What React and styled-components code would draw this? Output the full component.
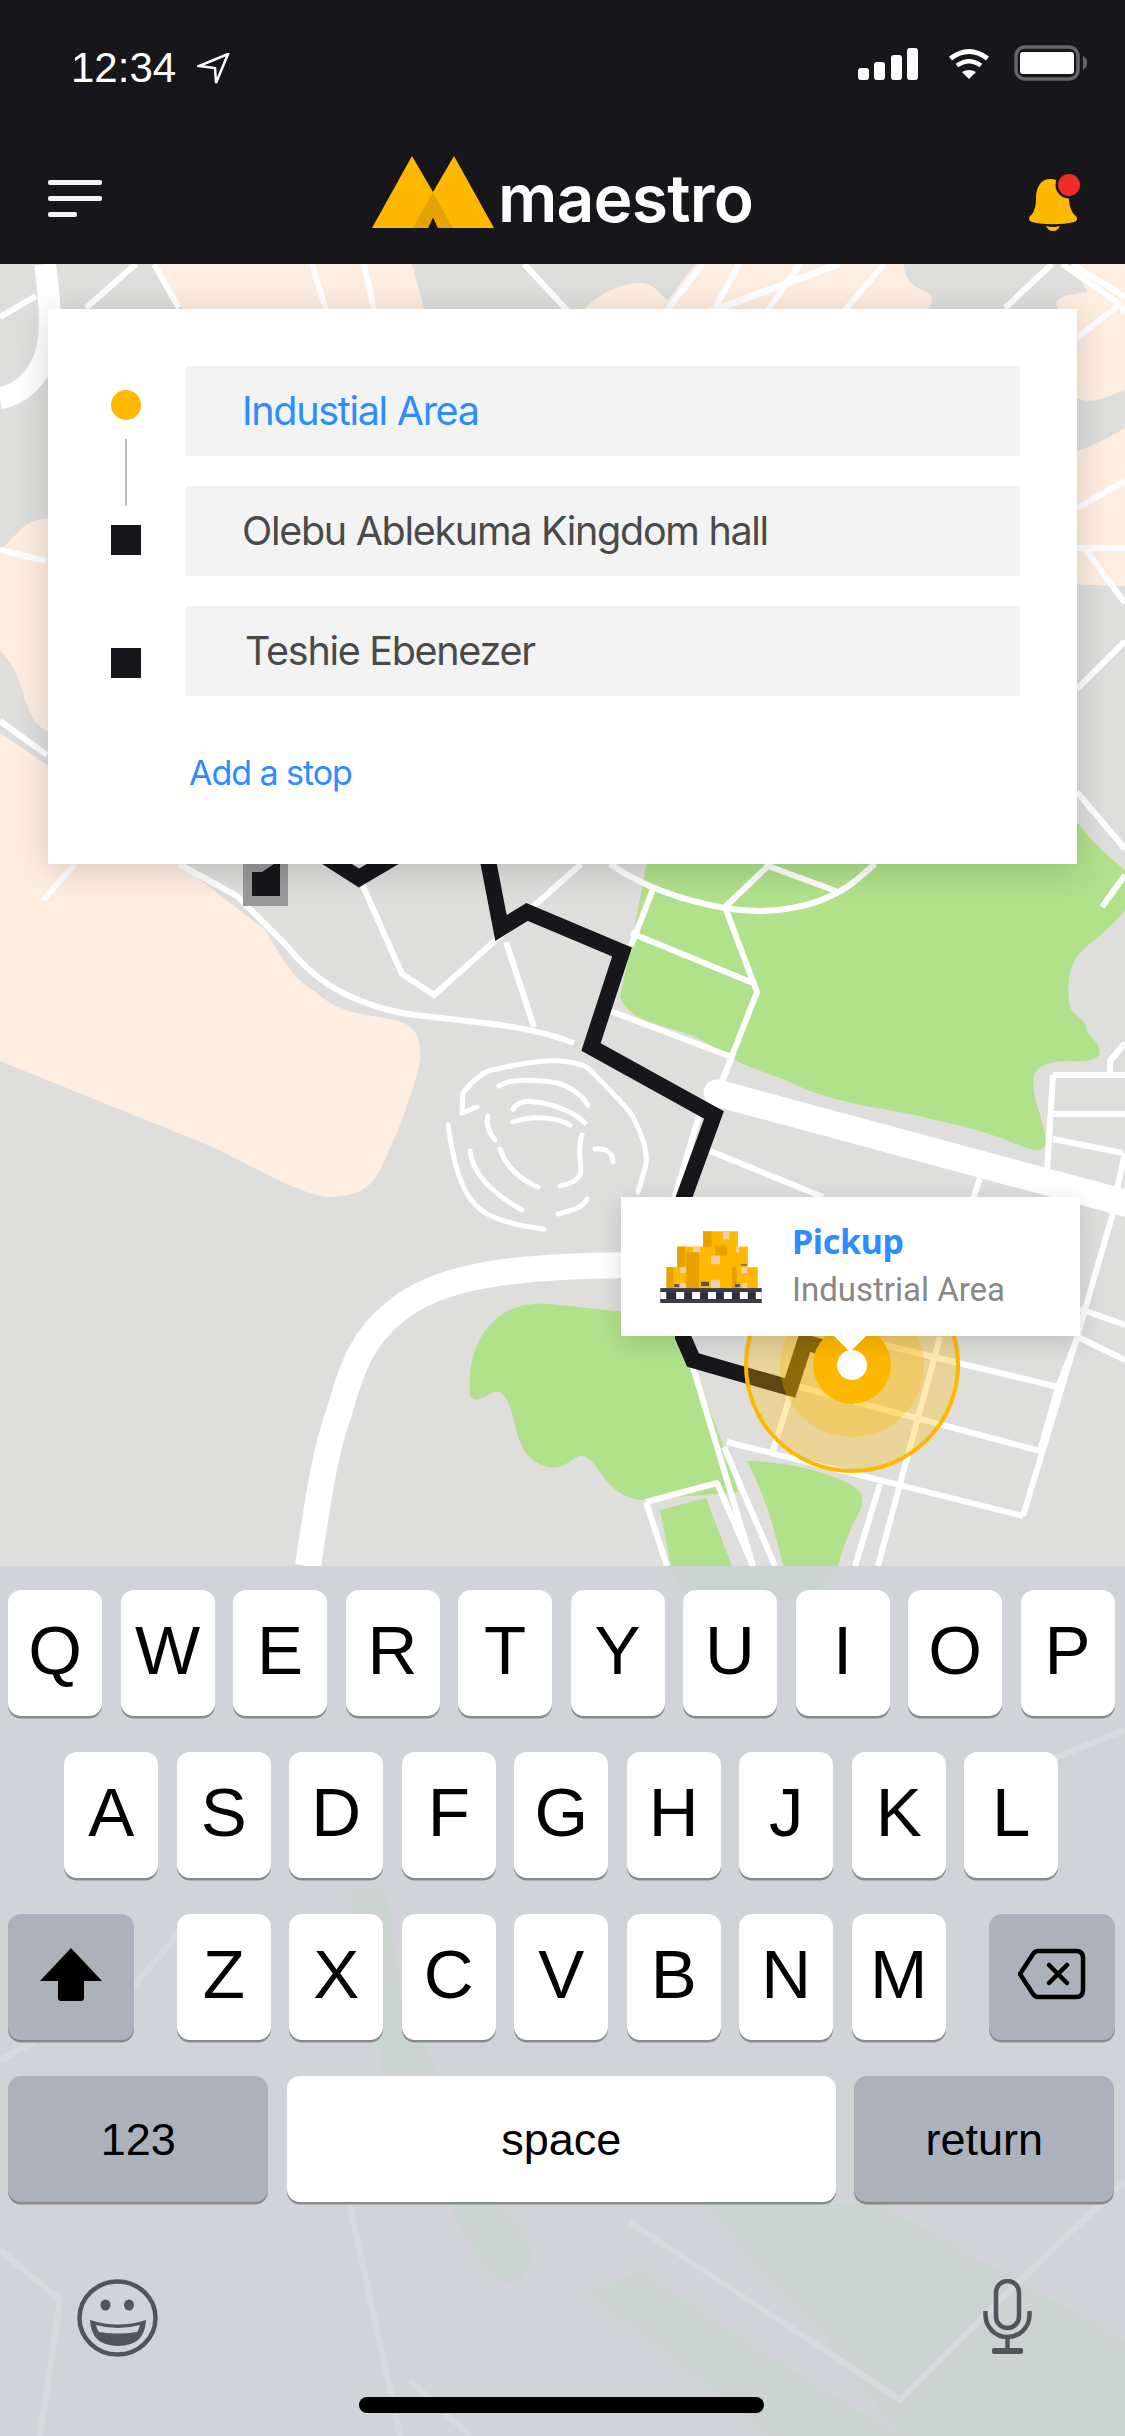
import React from "react";
import styled, { createGlobalStyle } from "styled-components";

const GlobalStyle = createGlobalStyle`
  html, body {
    margin: 0;
    padding: 0;
    background: #16161b;
  }
`;

const Phone = styled.div`
  width: 1125px;
  height: 2436px;
  display: flex;
  flex-direction: column;
  overflow: hidden;
  font-family: "Liberation Sans", Arial, sans-serif;
`;

const TopBar = styled.header`
  height: 264px;
  flex: none;
  background: #16161b;
  display: flex;
  flex-direction: column;
`;

const StatusBar = styled.div`
  height: 130px;
  display: flex;
  align-items: flex-start;
  justify-content: space-between;
  padding: 44px 38px 0 71px;
  box-sizing: border-box;
`;

const StatusLeft = styled.div`
  display: flex;
  align-items: flex-start;
  gap: 21px;
`;

const Time = styled.span`
  color: #fff;
  font-size: 42px;
  line-height: 48px;
`;

const StatusRight = styled.div`
  display: flex;
  align-items: flex-start;
  gap: 30px;
  padding-top: 4px;
`;

const NavBar = styled.div`
  flex: 1;
  display: flex;
  align-items: center;
  justify-content: space-between;
  padding: 0 42px 0 48px;
`;

const MenuButton = styled.div`
  width: 54px;
  display: flex;
  flex-direction: column;
  gap: 11px;
  margin-top: 2px;
`;

const MenuBar = styled.span`
  display: block;
  height: 5px;
  width: ${(p) => p.$w}px;
  border-radius: 2px;
  background: #f4f4f4;
`;

const Logo = styled.div`
  display: flex;
  align-items: flex-end;
  gap: 4px;
  margin: 0 6px 10px 0;
`;

const LogoText = styled.span`
  color: #fff;
  font-family: Inter, sans-serif;
  font-weight: 600;
  font-size: 66px;
  line-height: 66px;
  letter-spacing: -0.8px;
  margin-bottom: -3px;
`;

const BellWrap = styled.div`
  margin-top: 8px;
  height: 60px;
`;

const MapArea = styled.main`
  position: relative;
  height: 1302px;
  flex: none;
  background: #dededc;
`;

const MapSvg = styled.svg`
  display: block;
  width: 1125px;
  height: 1302px;
`;

const RouteCard = styled.section`
  position: absolute;
  left: 48px;
  top: 45px;
  width: 1029px;
  height: 555px;
  box-sizing: border-box;
  padding: 57px 57px 0 63px;
  background: #fff;
  display: flex;
  gap: 45px;
  box-shadow: 0 6px 34px rgba(0, 0, 0, 0.16);
`;

const Rail = styled.div`
  width: 30px;
  flex: none;
  display: flex;
  flex-direction: column;
  align-items: center;
  padding-top: 24px;
`;

const RailDot = styled.span`
  width: 30px;
  height: 30px;
  border-radius: 50%;
  background: #ffb800;
`;

const RailLine = styled.span`
  width: 2px;
  height: 67px;
  margin: 19px 0;
  background: #bdbdbd;
`;

const RailStop = styled.span`
  width: 30px;
  height: 30px;
  background: #16161b;
  margin-bottom: ${(p) => p.$gap || 0}px;
`;

const Fields = styled.div`
  flex: 1;
  display: flex;
  flex-direction: column;
  gap: 30px;
`;

const Field = styled.div`
  height: 90px;
  display: flex;
  align-items: center;
  box-sizing: border-box;
  padding-left: ${(p) => p.$inset || 56}px;
  background: #f3f3f3;
  color: ${(p) => (p.$active ? "#2d8cff" : "#4a4a4a")};
  font-family: Inter, sans-serif;
  font-size: 39.5px;
  letter-spacing: -1.3px;
`;

const AddStop = styled.div`
  margin: 27px 0 0 3px;
  color: #2d8cff;
  font-family: Inter, sans-serif;
  font-size: 34px;
  line-height: 40px;
  letter-spacing: -1.05px;
`;

const PickupCard = styled.aside`
  position: absolute;
  left: 621px;
  top: 933px;
  width: 459px;
  height: 139px;
  box-sizing: border-box;
  padding-left: 39px;
  background: #fff;
  display: flex;
  align-items: center;
  gap: 30px;
  box-shadow: 0 6px 24px rgba(0, 0, 0, 0.14);

  &::after {
    content: "";
    position: absolute;
    left: 213px;
    top: 139px;
    border-left: 16px solid transparent;
    border-right: 16px solid transparent;
    border-top: 16px solid #fff;
  }
`;

const PickupText = styled.div`
  display: flex;
  flex-direction: column;
  gap: 6px;
  padding-bottom: 4px;
`;

const PickupTitle = styled.span`
  color: #2d8cff;
  font-family: "Noto Sans", sans-serif;
  font-weight: 700;
  font-size: 34px;
  line-height: 44px;
  letter-spacing: -0.3px;
`;

const PickupPlace = styled.span`
  color: #888;
  font-family: Roboto, sans-serif;
  font-size: 33px;
  line-height: 42px;
`;

const Keyboard = styled.section`
  position: relative;
  flex: 1;
  background: #d0d4d9;
  box-sizing: border-box;
  padding: 24px 0 0 8px;
`;

const KeyboardBackdrop = styled.svg`
  position: absolute;
  left: 0;
  top: 0;
  width: 1125px;
  height: 870px;
`;

const KeyRow = styled.div`
  position: relative;
  width: 1106.5px;
  height: 126px;
  margin-bottom: 36px;
  display: flex;
  gap: 18.5px;
  justify-content: ${(p) => p.$justify || "center"};
`;

const LetterGroup = styled.div`
  display: flex;
  gap: 18.5px;
`;

const Key = styled.div`
  width: ${(p) => p.$w || 94}px;
  height: 126px;
  flex: none;
  display: flex;
  align-items: center;
  justify-content: center;
  box-sizing: border-box;
  border-radius: 13px;
  background: ${(p) => (p.$dark ? "#abb2bb" : "#fff")};
  box-shadow: 0 2.5px 0 #898a8e;
  color: #000;
  font-size: ${(p) => p.$size || 69}px;
  line-height: 1;
  padding-bottom: ${(p) => (p.$size ? 0 : 6)}px;
`;

const BottomRow = styled.div`
  position: relative;
  display: flex;
  align-items: flex-start;
  justify-content: space-between;
  margin-top: 77px;
  padding: 0 93px 0 69px;
`;

const HomeBar = styled.div`
  position: relative;
  width: 405px;
  height: 16px;
  margin: 40px 0 0 351px;
  border-radius: 8px;
  background: #000;
`;

const beigeShapes = [
  "M154 264 L412 264 L430 330 L300 330 L183 309 Z",
  "M574 320 C590 300 615 283 640 283 C655 283 660 296 668 300 C680 285 690 270 696 264 L904 264 C904 280 915 288 925 291 C935 296 934 304 925 312 L925 340 L560 340 Z",
  "M1072 264 L1125 264 L1125 390 C1105 398 1090 405 1077 398 L1060 398 L1060 310 C1050 300 1060 295 1088 292 Z",
  "M1060 455 L1077 451 C1095 445 1110 437 1125 428 L1125 586 L1060 584 Z",
  "M0 551 L20 530 C30 520 40 518 60 518 L60 740 L47 731 C35 725 30 715 22 690 C18 675 10 660 0 651 Z",
  "M0 733 L47 765 L180 864 L265 930 C285 965 300 985 316 992 C335 1010 350 1012 385 1018 C410 1022 422 1030 420 1060 C415 1090 395 1140 380 1170 C370 1190 355 1196 330 1197 C300 1195 250 1165 215 1148 L0 1061 Z",
];

const greenShapes = [
  "M649 850 L631 946 L620 997 C625 1008 632 1015 645 1020 C665 1028 680 1030 695 1037 C712 1045 722 1052 735 1060 C755 1070 770 1074 790 1082 C815 1095 840 1100 865 1106 C890 1110 912 1114 935 1120 C960 1125 985 1132 1004 1139 C1020 1146 1035 1152 1040 1150 C1047 1148 1046 1138 1044 1130 C1038 1105 1031 1092 1034 1076 C1038 1064 1050 1062 1065 1061 C1080 1062 1094 1062 1099 1055 C1102 1048 1095 1040 1090 1036 C1085 1030 1087 1024 1082 1020 C1074 1014 1069 1010 1069 1000 C1067 985 1069 970 1076 958 C1085 945 1108 932 1125 910 L1125 870 C1110 858 1095 845 1077 822 L860 822 Z",
  "M470 1396 C468 1370 472 1345 490 1325 C505 1308 525 1302 550 1304 L625 1312 L678 1337 L690 1360 L724 1447 L738 1492 L640 1500 C625 1498 612 1490 600 1472 C592 1460 585 1452 575 1458 C565 1466 555 1470 542 1465 C525 1458 520 1445 515 1425 C510 1405 505 1390 495 1392 C485 1394 478 1405 470 1396 Z",
  "M747 1461 C790 1462 830 1472 853 1486 C866 1494 864 1505 855 1520 C848 1535 842 1550 838 1566 L783 1566 C775 1530 765 1495 747 1461 Z",
  "M660 1510 L706 1498 L732 1566 L671 1566 Z",
];

const roads = [
  "M136 264 L86 308", "M154 264 L179 308", "M312 264 L326 310", "M364 264 L374 310",
  "M524 264 L567 310", "M703 264 L667 310", "M739 264 L714 310", "M800 264 L768 310",
  "M884 264 L845 310", "M0 317 L36 296", "M1005 308 L1052 264", "M1072 264 L1125 297",
  "M1077 338 L1120 304 L1062 264", "M1120 304 L1125 312", "M1077 508 L1125 481",
  "M1077 548 L1125 548", "M1083 546 L1125 603", "M1077 689 L1125 641", "M1077 792 L1125 849",
  "M0 550 L46 561", "M0 721 L47 755", "M43 900 L75 864",
  "M179 864 L237 896 L287 946 C310 975 340 1000 402 1013 C460 1022 520 1022 574 1043",
  "M362 884 L402 974 L434 995 L581 864", "M506 942 L534 1027",
  "M631 933 L753 983", "M725 907 L757 992 L721 1084", "M653 889 L631 946",
  "M610 864 C640 885 680 900 725 908 C770 916 820 908 854 882 L875 864",
  "M725 907 L768 866 L836 891", "M1102 907 L1125 875",
  "M610 1011 L732 1057", "M721 1084 L732 1057", "M699 1116 L674 1199",
  "M1053 1075 L1125 1075", "M1053 1075 L1047 1171", "M1053 1114 L1125 1114",
  "M1053 1139 L1123 1153", "M1125 1153 L1117 1190", "M1110 1073 L1110 1061 L1125 1043",
  "M980 1178 L973 1199", "M710 1151 L823 1197", "M1113 1213 L1077 1337 L1023 1516",
  "M1080 1309 L1125 1325", "M1078 1337 L1125 1360", "M880 1344 L1058 1387 L1078 1337",
  "M800 1387 L1040 1451 L1058 1387", "M727 1442 L1023 1516", "M940 1337 L900 1484 L878 1566",
  "M790 1396 L773 1451", "M880 1484 L855 1566", "M692 1364 L753 1566",
  "M724 1447 L775 1566", "M646 1502 L717 1483 L753 1566", "M646 1502 L667 1566",
];

const maze = [
  "M477 1107 L462 1113 L463 1093 C475 1078 485 1070 497 1069 C520 1064 540 1060 560 1061 C575 1063 585 1064 590 1070 C610 1090 625 1105 632 1115 C642 1135 648 1150 646 1165 L638 1192",
  "M499 1086 C510 1078 535 1080 552 1082 C565 1084 580 1092 588 1105",
  "M513 1109 C518 1102 525 1100 535 1102 C550 1103 575 1112 585 1123",
  "M513 1122 C530 1116 555 1116 570 1125",
  "M488 1116 C486 1122 488 1132 495 1140",
  "M448 1125 C452 1150 455 1170 465 1190 C475 1210 490 1222 544 1229",
  "M470 1151 C473 1175 495 1195 522 1210",
  "M500 1149 C505 1165 520 1180 538 1187",
  "M582 1135 C578 1145 580 1160 581 1171 C580 1180 570 1184 560 1186",
  "M595 1149 C605 1148 613 1152 613 1162",
  "M587 1199 C583 1208 570 1211 558 1214",
];

const ROUTE = "486,850 501,928 527,912 622,952 591,1047 714,1115 683,1200 683,1337 693,1360 790,1388 805,1342 830,1350";

// map artwork, drawn in page coordinates so it lines up with the overlays
function RouteMap() {
  return (
    <MapSvg viewBox="0 264 1125 1302">
      {beigeShapes.map((d) => (
        <path key={d} d={d} fill="#fdeee0" />
      ))}
      {greenShapes.map((d) => (
        <path key={d} d={d} fill="#b1e18b" />
      ))}
      <g fill="none" stroke="#fff" strokeWidth="6" strokeLinejoin="round">
        {roads.map((d) => (
          <path key={d} d={d} />
        ))}
        <path d="M839 264 L660 330" strokeWidth="7" />
        <path d="M45 264 C50 300 52 330 47 350 C40 378 20 395 0 398" strokeWidth="22" />
        <path d="M717 1093 L1125 1203" strokeWidth="27" strokeLinecap="round" />
        <path d="M308 1566 C318 1500 325 1450 340 1410 C352 1365 365 1335 395 1312 C430 1282 490 1265 640 1265" strokeWidth="26" />
      </g>
      <g fill="none" stroke="#fff" strokeWidth="5" strokeLinecap="round" strokeLinejoin="round">
        {maze.map((d) => (
          <path key={d} d={d} />
        ))}
      </g>
      <rect x="243" y="850" width="45" height="56" fill="#999" />
      <path d="M252 896 V872 H262 L280 860 V896 Z" fill="#16161b" />
      <polyline points="323,855 359,878 420,842" fill="none" stroke="#16161b" strokeWidth="16" />
      <polyline points={ROUTE} fill="none" stroke="#16161b" strokeWidth="16" />
      <circle cx="852" cy="1365" r="106" fill="rgba(255,184,0,0.3)" stroke="#ffb800" strokeWidth="4" />
      <circle cx="852" cy="1365" r="72" fill="rgba(255,184,0,0.3)" />
      <circle cx="852" cy="1365" r="39" fill="#ffb800" />
      <circle cx="852" cy="1365" r="15" fill="#fff" />
    </MapSvg>
  );
}

function KeyboardTint() {
  return (
    <KeyboardBackdrop viewBox="0 1566 1125 870">
      <g fill="#cad4d0">
        <path d="M667 1566 H840 L810 1600 H690 Z" />
        <path d="M350 1890 L387 1890 L402 2000 L500 2204 C525 2230 545 2255 520 2280 C505 2290 490 2275 470 2245 L387 2100 Z" />
        <path d="M588 2293 L640 2270 L760 2350 L900 2436 L770 2436 Z" />
        <path d="M700 2204 L880 2204 L1125 2340 L1125 2436 L900 2436 L820 2330 Z" />
      </g>
      <g fill="none" stroke="#d7dade" strokeWidth="6">
        <path d="M0 2060 L130 1990 L190 1920" />
        <path d="M350 2206 L400 2436" />
        <path d="M630 2222 L900 2400 L1000 2300 L1125 2180" />
        <path d="M0 2250 L60 2300 L40 2436" />
        <path d="M1000 1780 L1125 1730" />
        <path d="M410 2380 L470 2436" />
      </g>
    </KeyboardBackdrop>
  );
}

function LocationArrow() {
  return (
    <svg width="33" height="32" viewBox="0 0 33 32" style={{ marginTop: 9 }}>
      <path d="M31 1 L2 13 L18 15 L19 30 Z" fill="#16161b" stroke="#fff" strokeWidth="2.5" strokeLinejoin="miter" />
    </svg>
  );
}

function SignalIcon() {
  return (
    <svg width="60" height="32" viewBox="0 0 60 32" fill="#fff">
      <rect x="0" y="20" width="11" height="12" rx="3" />
      <rect x="16" y="14" width="11" height="18" rx="3" />
      <rect x="33" y="7" width="11" height="25" rx="3" />
      <rect x="49" y="0" width="11" height="32" rx="3" />
    </svg>
  );
}

function WifiIcon() {
  return (
    <svg width="42" height="32" viewBox="0 0 42 32">
      <path d="M2.5 10.5 Q21 -3.5 39.5 10.5" fill="none" stroke="#fff" strokeWidth="5" />
      <path d="M9 17.5 Q21 9 33 17.5" fill="none" stroke="#fff" strokeWidth="4.5" />
      <path d="M14 24 Q21 20 28 24 L21 31 Z" fill="#fff" />
    </svg>
  );
}

function BatteryIcon() {
  return (
    <svg width="73" height="36" viewBox="0 0 73 36" style={{ marginTop: -3, marginLeft: -6 }}>
      <rect x="2" y="2" width="62" height="32" rx="9" fill="none" stroke="#666" strokeWidth="3.5" />
      <rect x="6" y="7" width="54" height="22" rx="3" fill="#fff" />
      <path d="M69 11 C72 13 73 15 73 18 C73 21 72 23 69 25 Z" fill="#666" />
    </svg>
  );
}

function BellIcon() {
  return (
    <svg width="54" height="60" viewBox="0 -8 54 60">
      <path d="M21 0 C12 0 7 8 7 19 C7 28 5 34 1 37 C-1 40 0 42 3 43 C15 46 33 46 45 43 C48 42 49 40 47 37 C43 34 40 28 40 19 C40 8 31 0 21 0 Z" fill="#ffb800" />
      <path d="M17 47 Q24 49 31 47 Q29 52 24 52 Q19 52 17 47 Z" fill="#ffb800" />
      <circle cx="40" cy="6" r="13.5" fill="#16161b" />
      <circle cx="40" cy="6" r="11" fill="#f32a2a" />
    </svg>
  );
}

function LogoMark() {
  return (
    <svg width="122" height="72" viewBox="0 0 122 72">
      <path d="M0 72 L40 0 L61 36 L82 0 L122 72 L66 72 L61 61 L56 72 Z" fill="#ffb800" />
      <path d="M41 72 L61 36 L81 72 L66 72 L61 61 L56 72 Z" fill="#e3a300" />
    </svg>
  );
}

function CargoIcon() {
  return (
    <svg width="102" height="72" viewBox="180 188 306 217">
      <rect x="309" y="189" width="105" height="60" fill="#ffb800" />
      <rect x="309" y="189" width="26" height="60" fill="#e8a200" />
      <rect x="369" y="189" width="19" height="24" fill="#f3cfa6" />
      <rect x="231" y="235" width="213" height="70" fill="#ffb800" />
      <rect x="231" y="235" width="24" height="70" fill="#e8a200" />
      <rect x="345" y="232" width="36" height="30" fill="#e8a200" />
      <rect x="279" y="235" width="21" height="18" fill="#f3cfa6" />
      <rect x="408" y="235" width="10" height="18" fill="#f3cfa6" />
      <rect x="199" y="297" width="275" height="63" fill="#ffb800" />
      <rect x="199" y="297" width="20" height="63" fill="#e8a200" />
      <rect x="258" y="252" width="39" height="108" fill="#e8a200" />
      <rect x="396" y="297" width="15" height="63" fill="#e8a200" />
      <rect x="333" y="262" width="27" height="26" fill="#f3cfa6" />
      <rect x="240" y="297" width="18" height="18" fill="#f3cfa6" />
      <rect x="426" y="297" width="16" height="18" fill="#f3cfa6" />
      <rect x="333" y="335" width="27" height="25" fill="#f3cfa6" />
      <rect x="240" y="345" width="18" height="15" fill="#f3cfa6" />
      <rect x="426" y="345" width="16" height="15" fill="#f3cfa6" />
      <rect x="303" y="341" width="24" height="13" fill="#555" />
      <rect x="222" y="348" width="15" height="9" fill="#555" />
      <rect x="405" y="348" width="15" height="9" fill="#555" />
      <rect x="423" y="287" width="18" height="6" fill="#777" />
      <rect x="180" y="360" width="306" height="12" fill="#3b3d44" />
      <rect x="180" y="372" width="306" height="21" fill="#2b2e3a" />
      {[180, 228, 276, 324, 372, 420, 468].map((x) => (
        <rect key={x} x={x} y="372" width={x === 180 || x === 468 ? 18 : 24} height="21" fill="#fff" />
      ))}
      <rect x="180" y="393" width="306" height="12" fill="#3b3d44" />
    </svg>
  );
}

function ShiftIcon() {
  return (
    <svg width="62" height="53" viewBox="0 0 62 53">
      <path d="M31 0 L62 33 H44 V50 Q44 53 41 53 H21 Q18 53 18 50 V33 H0 Z" fill="#000" strokeLinejoin="round" />
    </svg>
  );
}

function BackspaceIcon() {
  return (
    <svg width="68" height="52" viewBox="0 0 68 52" fill="none" stroke="#000" strokeWidth="4.5">
      <path d="M20 3 H58 Q65 3 65 10 V42 Q65 49 58 49 H20 Q17 49 15 46 L2 26 L15 6 Q17 3 20 3 Z" strokeLinejoin="round" />
      <path d="M31 17 L49 35 M49 17 L31 35" strokeLinecap="round" />
    </svg>
  );
}

function EmojiIcon() {
  return (
    <svg width="81" height="78" viewBox="0 0 81 78">
      <ellipse cx="40.5" cy="39" rx="38" ry="36.5" fill="none" stroke="#50555c" strokeWidth="4.5" />
      <ellipse cx="28.5" cy="26" rx="5" ry="5.5" fill="#50555c" />
      <ellipse cx="52" cy="26" rx="5" ry="5.5" fill="#50555c" />
      <path d="M13 41 Q41 50 69 41 Q68 67 41 67 Q14 67 13 41 Z" fill="#50555c" />
      <path d="M19 46 Q41 52 63 46 Q62 51 60 53 Q41 56 22 53 Q20 51 19 46 Z" fill="#d0d4d9" />
    </svg>
  );
}

function MicIcon() {
  return (
    <svg width="49" height="75" viewBox="0 0 49 75" fill="none" stroke="#50555c" strokeWidth="4.5">
      <rect x="13" y="2" width="23" height="47" rx="11.5" />
      <path d="M2.5 32 V36 A22 22 0 0 0 46.5 36 V32" />
      <path d="M24.5 58 V71" />
      <rect x="9" y="69" width="31" height="6" rx="2" fill="#50555c" stroke="none" />
    </svg>
  );
}

const rowOne = ["Q", "W", "E", "R", "T", "Y", "U", "I", "O", "P"];
const rowTwo = ["A", "S", "D", "F", "G", "H", "J", "K", "L"];
const rowThree = ["Z", "X", "C", "V", "B", "N", "M"];

export default function App() {
  return (
    <Phone>
      <GlobalStyle />
      <TopBar>
        <StatusBar>
          <StatusLeft>
            <Time>12:34</Time>
            <LocationArrow />
          </StatusLeft>
          <StatusRight>
            <SignalIcon />
            <WifiIcon />
            <BatteryIcon />
          </StatusRight>
        </StatusBar>
        <NavBar>
          <MenuButton>
            <MenuBar $w={54} />
            <MenuBar $w={54} />
            <MenuBar $w={29} />
          </MenuButton>
          <Logo>
            <LogoMark />
            <LogoText>maestro</LogoText>
          </Logo>
          <BellWrap>
            <BellIcon />
          </BellWrap>
        </NavBar>
      </TopBar>

      <MapArea>
        <RouteMap />
        <RouteCard>
          <Rail>
            <RailDot />
            <RailLine />
            <RailStop $gap={93} />
            <RailStop />
          </Rail>
          <Fields>
            <Field $active>Industial Area</Field>
            <Field>Olebu Ablekuma Kingdom hall</Field>
            <Field $inset={59}>Teshie Ebenezer</Field>
            <AddStop>Add a stop</AddStop>
          </Fields>
        </RouteCard>
        <PickupCard>
          <CargoIcon />
          <PickupText>
            <PickupTitle>Pickup</PickupTitle>
            <PickupPlace>Industrial Area</PickupPlace>
          </PickupText>
        </PickupCard>
      </MapArea>

      <Keyboard>
        <KeyboardTint />
        <KeyRow>
          {rowOne.map((k) => (
            <Key key={k}>{k}</Key>
          ))}
        </KeyRow>
        <KeyRow>
          {rowTwo.map((k) => (
            <Key key={k}>{k}</Key>
          ))}
        </KeyRow>
        <KeyRow $justify="space-between">
          <Key $dark $w={126}>
            <ShiftIcon />
          </Key>
          <LetterGroup>
            {rowThree.map((k) => (
              <Key key={k}>{k}</Key>
            ))}
          </LetterGroup>
          <Key $dark $w={126}>
            <BackspaceIcon />
          </Key>
        </KeyRow>
        <KeyRow>
          <Key $dark $w={260} $size={45}>123</Key>
          <Key $w={549} $size={45}>space</Key>
          <Key $dark $w={260} $size={45}>return</Key>
        </KeyRow>
        <BottomRow>
          <EmojiIcon />
          <MicIcon />
        </BottomRow>
        <HomeBar />
      </Keyboard>
    </Phone>
  );
}
